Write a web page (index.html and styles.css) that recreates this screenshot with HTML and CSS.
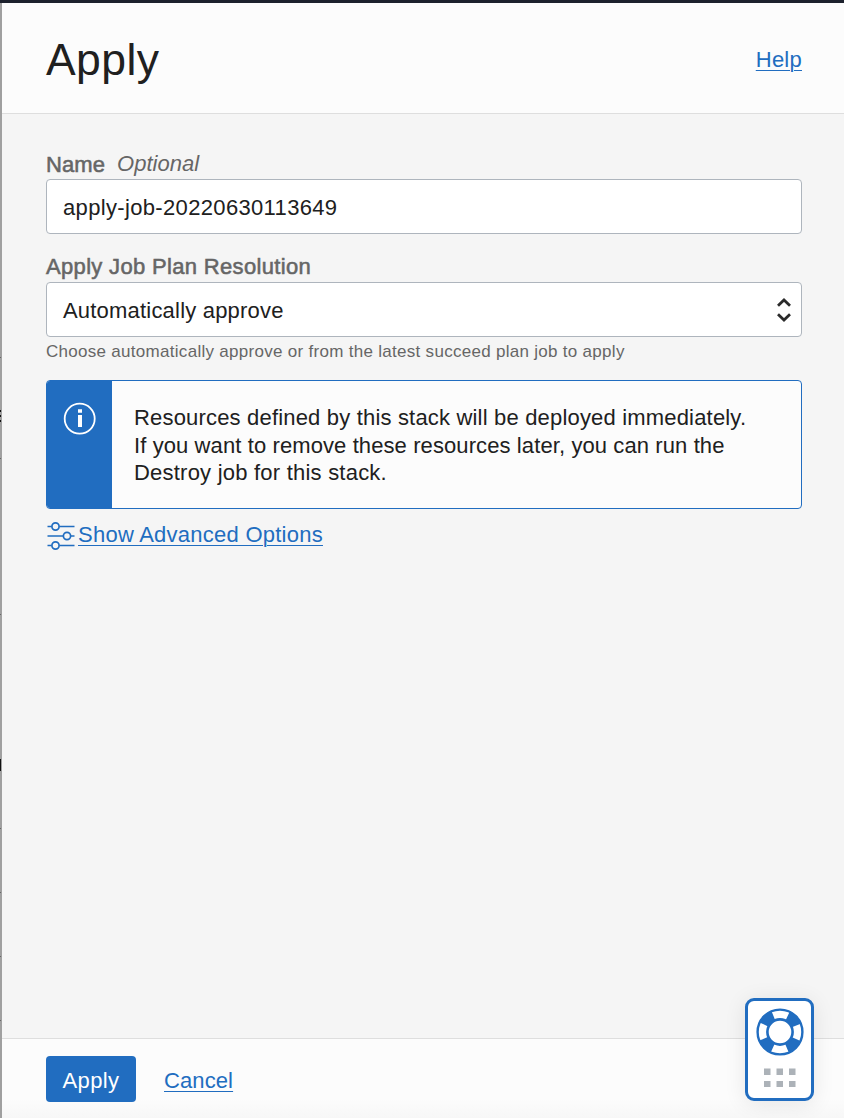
FILE: index.html
```html
<!DOCTYPE html>
<html lang="en">
<head>
<meta charset="utf-8">
<title>Apply</title>
<link rel="stylesheet" href="styles.css">
</head>
<body>
<div class="screen">
  <div class="backdrop">
    <i class="mark faint m1"></i><i class="mark m2"></i><i class="mark m3"></i><i class="mark m4"></i>
    <i class="mark faint m5"></i><i class="mark faint m6"></i><i class="mark m7"></i><i class="mark faint m8"></i>
    <i class="mark faint m9"></i><i class="mark faint m10"></i><i class="mark faint m11"></i>
  </div>
  <section class="panel">
    <header class="header">
      <h1 class="title">Apply</h1>
      <a class="link help" href="#">Help</a>
    </header>
    <main class="body">
      <label class="label"><span class="strong name">Name</span><em class="optional">Optional</em></label>
      <div class="field"><span class="value job">apply-job-20220630113649</span></div>
      <label class="label second"><span class="strong resolution">Apply Job Plan Resolution</span></label>
      <div class="field select">
        <span class="value choice">Automatically approve</span>
        <svg class="arrows" width="16" height="26" viewBox="0 0 16 26" fill="none" stroke="#2b2b2b" stroke-width="2.8"><path d="M2 8.700 8 3l6 5.700M2 17.300 8 23l6-5.700"/></svg>
      </div>
      <p class="hint">Choose automatically approve or from the latest succeed plan job to apply</p>
      <div class="notice">
        <div class="notice-side">
          <svg width="34" height="34" viewBox="0 0 34 34"><circle cx="16.700" cy="16.700" r="15" fill="none" stroke="#fff" stroke-width="1.8"/><path fill="#fff" d="M15 7.200h4v3.600h-4zM15 13h4v12h-4z"/></svg>
        </div>
        <p class="notice-text"><span class="l1">Resources defined by this stack will be deployed immediately.</span><br><span class="l2">If you want to remove these resources later, you can run the</span><br><span class="l3">Destroy job for this stack.</span></p>
      </div>
      <div class="advanced">
        <svg width="30" height="30" viewBox="0 0 30 30" fill="none" stroke="#216dc0" stroke-width="1.7"><path d="M1.500 5.500h4M13.500 5.500H28.500M1.500 15H17M25 15h3.500M1.500 24.500h4M13.500 24.500H28.500"/><circle cx="9.500" cy="5.500" r="3.600"/><circle cx="21" cy="15" r="3.600"/><circle cx="9.500" cy="24.500" r="3.600"/></svg>
        <a class="link options" href="#">Show Advanced Options</a>
      </div>
    </main>
    <footer class="footer">
      <button class="button">Apply</button>
      <a class="link cancel" href="#">Cancel</a>
    </footer>
  </section>
  <aside class="support">
    <svg width="48" height="48" viewBox="0 0 48 48" fill="none" stroke="#216dc0"><circle cx="24" cy="24" r="17.500" stroke-width="11" stroke-dasharray="13 14.489" stroke-dashoffset="-7.244"/><circle cx="24" cy="24" r="22.400" stroke-width="2.400"/><circle cx="24" cy="24" r="12.600" stroke-width="2.600"/></svg>
    <svg class="dots" width="32" height="20" viewBox="0 0 32 20" fill="#acb2b8"><path d="M0 .5h6.500V7H0zM12.500.5H19V7h-6.500zM25 .5h6.500V7H25zM0 13h6.500v6H0zM12.500 13H19v6h-6.500zM25 13h6.500v6H25z"/></svg>
  </aside>
</div>
</body>
</html>
```
FILE: styles.css
```css
* { box-sizing: border-box; }
body { margin: 0; font: 22px/28px "Liberation Sans", Arial, sans-serif; color: #202020; letter-spacing: .25px; }
h1, p { margin: 0; font-weight: 400; }
.screen { position: relative; width: 844px; height: 1118px; display: flex; border-top: 3px solid #1d212d; overflow: hidden; }
.backdrop { position: relative; width: 2px; flex: none; background: #a0a0a0; }
.mark { position: absolute; left: 0; width: 1px; height: 2px; background: #111; }
.faint { height: 1px; background: #666; }
.m1 { top: 354px; } .m2 { top: 407px; } .m3 { top: 412px; } .m4 { top: 417px; } .m5 { top: 455px; } .m6 { top: 611px; }
.m7 { top: 756px; height: 12px; } .m8 { top: 825px; } .m9 { top: 889px; } .m10 { top: 953px; } .m11 { top: 1017px; }
.panel { flex: 1; display: flex; flex-direction: column; background: #f5f5f5; }
.header { height: 111px; flex: none; display: flex; align-items: center; justify-content: space-between; padding: 4px 42px 0 44px; background: #fcfcfc; border-bottom: 1px solid #dedede; }
.title { font-size: 44.5px; line-height: 52px; letter-spacing: .4px; }
.link { color: #216dc0; text-decoration: underline; text-decoration-thickness: 1px; text-underline-offset: 3px; }
.body { flex: 1; padding: 37px 42px 0 44px; }
.label { display: flex; gap: 12px; height: 28px; color: #666; }
.second { height: 29px; margin-top: 19px; }
.strong { -webkit-text-stroke: .55px #666; }
.name { letter-spacing: .1px; }
.resolution { letter-spacing: .33px; }
.optional { margin-top: -1px; letter-spacing: 0; }
.field { height: 55px; display: flex; align-items: center; justify-content: space-between; padding: 1px 9px 0 16px; border: 1px solid #aeb5bd; border-radius: 4px; background: #fff; }
.value { padding-top: 2px; }
.job { letter-spacing: .34px; }
.choice { letter-spacing: .2px; }
.hint { padding-top: 1px; color: #666; font-size: 17px; line-height: 28px; letter-spacing: .29px; white-space: nowrap; }
.notice { display: flex; height: 129px; margin-top: 14px; border: 1px solid #216dc0; border-radius: 4px; background: #fcfcfc; overflow: hidden; }
.notice-side { width: 65px; flex: none; padding: 21px 0 0 16px; background: #216dc0; }
.notice-text { padding: 23px 0 0 22px; line-height: 27.5px; white-space: nowrap; }
.l1 { letter-spacing: .18px; }
.l2 { letter-spacing: .1px; }
.l3 { letter-spacing: .22px; }
.advanced { display: flex; gap: 2px; padding-top: 12px; }
.footer { height: 80px; flex: none; display: flex; align-items: flex-start; gap: 28px; padding: 17px 44px 0; border-top: 1px solid #dedede; background: linear-gradient(#fcfcfc 75%, #f7f7f7); }
.button { width: 90px; height: 46px; padding: 3px 0 0; border: 0; border-radius: 4px; background: #216dc0; color: #fff; font: inherit; letter-spacing: .4px; }
.cancel { margin-top: 11px; letter-spacing: .1px; }
.support { position: absolute; left: 745px; top: 995px; width: 69px; height: 103px; border: 3px solid #216dc0; border-radius: 9px; background: #fff; display: flex; flex-direction: column; align-items: center; padding-top: 7px; gap: 12px; box-shadow: 0 3px 22px rgba(0,0,0,.09); }
.dots { flex: none; }
```
